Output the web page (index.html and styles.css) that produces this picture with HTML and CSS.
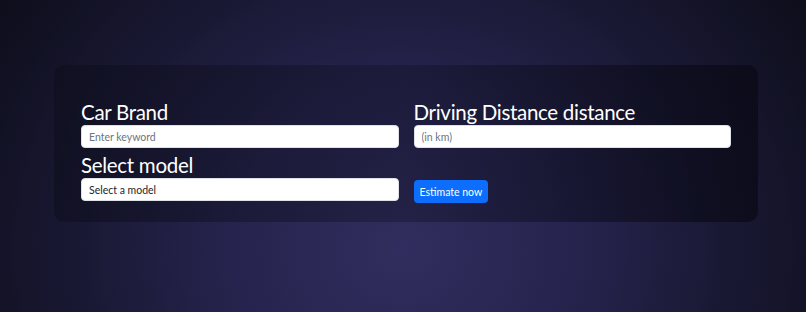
FILE: index.html
```html
<!DOCTYPE html>
<html lang="en">
<head>
<meta charset="utf-8">
<title>Estimate</title>
<link rel="stylesheet" href="styles.css">
</head>
<body>
<div class="page">
  <div class="card">
    <div class="grid">
      <div class="field">
        <label class="label" for="brand">Car Brand</label>
        <input class="control" id="brand" type="text" placeholder="Enter keyword">
      </div>
      <div class="field">
        <label class="label" for="dist">Driving Distance distance</label>
        <input class="control" id="dist" type="text" placeholder="(in km)">
      </div>
      <div class="field">
        <label class="label" for="model">Select model</label>
        <div class="control select" id="model">Select a model</div>
      </div>
      <div class="field action">
        <button class="btn" type="button">Estimate now</button>
      </div>
    </div>
  </div>
</div>
</body>
</html>
```
FILE: styles.css
```css
* { box-sizing: border-box; }
html, body {
  margin: 0;
  height: 100%;
}
body {
  font-family: "Lato", "Noto Sans", sans-serif;
  background: radial-gradient(ellipse 60% 140% at 50% 80%, #312d5e 0%, #26244e 35%, #1a1935 65%, #0e0e1c 100%);
  color: #fff;
}
.page {
  padding: 65px 48px 0 54px;
}
.card {
  background: linear-gradient(90deg, rgba(12,12,26,0.5) 0%, rgba(12,12,26,0.32) 50%, rgba(6,6,16,0.6) 100%);
  border-radius: 10px;
  padding: 35px 27px 21px 27px;
}
.grid {
  display: grid;
  grid-template-columns: 1fr 1fr;
  column-gap: 15px;
  row-gap: 5px;
}
.field {
  display: flex;
  flex-direction: column;
  gap: 1px;
}
.action {
  justify-content: flex-end;
}
.label {
  font-size: 20.5px;
  letter-spacing: -0.3px;
  line-height: 24px;
  color: #fff;
}
.control {
  height: 23px;
  border: 1px solid #dee2e6;
  border-radius: 4px;
  background: #fff;
  padding: 0 7px;
  font-family: inherit;
  font-size: 10.5px;
  color: #212529;
  outline: none;
  width: 100%;
}
.control::placeholder {
  color: #6c757d;
}
.select {
  display: flex;
  align-items: center;
}
.btn {
  align-self: flex-start;
  height: 23px;
  margin-bottom: -2px;
  padding: 0 6px;
  border: none;
  border-radius: 4px;
  background: #0d6efd;
  color: #fff;
  font-family: inherit;
  font-size: 10.5px;
}
```
